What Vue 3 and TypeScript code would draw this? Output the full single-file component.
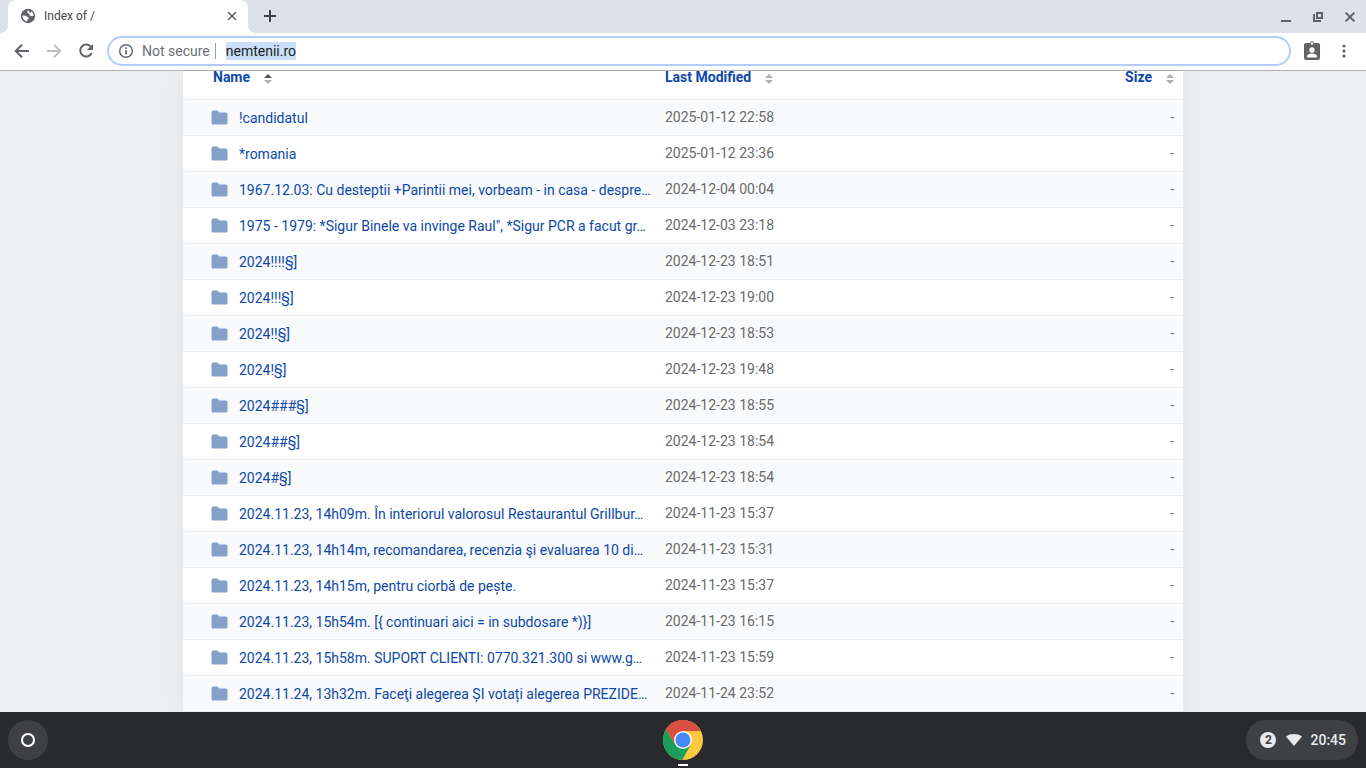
<script setup lang="ts">
import { onMounted, ref } from 'vue'

interface Entry {
  name: string
  modified: string
}

const entries: Entry[] = [
  { name: '!candidatul', modified: '2025-01-12 22:58' },
  { name: '*romania', modified: '2025-01-12 23:36' },
  { name: '1967.12.03: Cu desteptii +Parintii mei, vorbeam - in casa - despre…', modified: '2024-12-04 00:04' },
  { name: '1975 - 1979: *Sigur Binele va invinge Raul", *Sigur PCR a facut gr…', modified: '2024-12-03 23:18' },
  { name: '2024!!!!§]', modified: '2024-12-23 18:51' },
  { name: '2024!!!§]', modified: '2024-12-23 19:00' },
  { name: '2024!!§]', modified: '2024-12-23 18:53' },
  { name: '2024!§]', modified: '2024-12-23 19:48' },
  { name: '2024###§]', modified: '2024-12-23 18:55' },
  { name: '2024##§]', modified: '2024-12-23 18:54' },
  { name: '2024#§]', modified: '2024-12-23 18:54' },
  { name: '2024.11.23, 14h09m. În interiorul valorosul Restaurantul Grillbur…', modified: '2024-11-23 15:37' },
  { name: '2024.11.23, 14h14m, recomandarea, recenzia şi evaluarea 10 di…', modified: '2024-11-23 15:31' },
  { name: '2024.11.23, 14h15m, pentru ciorbă de pește.', modified: '2024-11-23 15:37' },
  { name: '2024.11.23, 15h54m. [{ continuari aici = in subdosare *)}]', modified: '2024-11-23 16:15' },
  { name: '2024.11.23, 15h58m. SUPORT CLIENTI: 0770.321.300 si www.g…', modified: '2024-11-23 15:59' },
  { name: '2024.11.24, 13h32m. Faceţi alegerea ȘI votați alegerea PREZIDE…', modified: '2024-11-24 23:52' },
]

const address = ref('nemtenii.ro')
const addressBox = ref<HTMLInputElement | null>(null)

onMounted(() => {
  addressBox.value?.focus()
  addressBox.value?.select()
})
</script>

<template>
  <div class="desktop">
    <header class="tabstrip">
      <div class="tab">
        <svg class="globe" viewBox="0 0 16 16" aria-hidden="true">
          <circle cx="8" cy="8" r="7.200" fill="#5f6368" />
          <path d="M8.800 2.600C7 3.200 6.800 4.600 7.800 5.300l1.400.5.600 1.600 1.900.8 1.900-.5C13.600 6 12.700 4.500 11.500 3.600L10.600 4.800 9.400 4.300z" fill="#fff" />
          <path d="M2.400 7.600l3.600.2 1 1 1.900.7-.3 1.500-1.200.6-.2 1.900C4.400 13.200 2.300 10.800 2.400 7.600z" fill="#fff" />
        </svg>
        <span class="tab-title">Index of /</span>
        <button class="icon-button" type="button" aria-label="Close tab">
          <svg width="16" height="16" viewBox="0 0 16 16"><path d="M4 4l8 8M12 4l-8 8" stroke="#5f6368" stroke-width="1.6" /></svg>
        </button>
      </div>
      <button class="icon-button new-tab" type="button" aria-label="New tab">
        <svg width="16" height="16" viewBox="0 0 16 16"><path d="M8 2v12M2 8h12" stroke="#3c4043" stroke-width="2" /></svg>
      </button>
      <div class="window-controls">
        <button class="icon-button" type="button" aria-label="Minimize">
          <svg width="16" height="16" viewBox="0 0 16 16"><path d="M3 13h10" stroke="#5f6368" stroke-width="2" /></svg>
        </button>
        <button class="icon-button" type="button" aria-label="Restore">
          <svg width="16" height="16" viewBox="0 0 16 16" fill="none" stroke="#5f6368" stroke-width="2"><path d="M7 5h5v5H7zM4 6v7h7" /></svg>
        </button>
        <button class="icon-button" type="button" aria-label="Close window">
          <svg width="16" height="16" viewBox="0 0 16 16"><path d="M3.600 4.600l8.800 8.800M12.400 4.600l-8.800 8.800" stroke="#5f6368" stroke-width="2" /></svg>
        </button>
      </div>
    </header>

    <nav class="toolbar">
      <button class="icon-button" type="button" aria-label="Back">
        <svg width="16" height="16" viewBox="0 0 16 16" fill="none" stroke="#5f6368" stroke-width="2"><path d="M15 8H2.500M8 1.700L1.700 8 8 14.300" /></svg>
      </button>
      <button class="icon-button" type="button" aria-label="Forward">
        <svg width="16" height="16" viewBox="0 0 16 16" fill="none" stroke="#bdbfc1" stroke-width="2"><path d="M1 8h12.500M8 1.700L14.300 8 8 14.300" /></svg>
      </button>
      <button class="icon-button" type="button" aria-label="Reload">
        <svg width="16" height="16" viewBox="0 0 16 16"><path d="M13.200 4.100A6 6 0 1 0 13.700 10" fill="none" stroke="#5f6368" stroke-width="2" /><path d="M15 1v6H9z" fill="#5f6368" /></svg>
      </button>
      <div class="omnibox">
        <svg width="16" height="16" viewBox="0 0 16 16" fill="none" stroke="#5f6368">
          <circle cx="8" cy="8" r="6.300" stroke-width="1.400" />
          <path d="M8 7v4.500M8 4.300v1.600" stroke-width="1.600" />
        </svg>
        <label class="security" for="address">Not secure</label>
        <input id="address" ref="addressBox" v-model="address" class="address" type="text" spellcheck="false" />
      </div>
      <button class="icon-button badge" type="button" aria-label="Profile">
        <svg width="18" height="20" viewBox="0 0 18 20">
          <rect x="1" y="2" width="16" height="17" rx="2" fill="#5f6368" />
          <circle cx="9" cy="2.500" r="1.800" fill="#fff" stroke="#5f6368" />
          <circle cx="9" cy="9" r="2.700" fill="#fff" />
          <path d="M4 16.500v-1.200c0-1.700 3-2.700 5-2.700s5 1 5 2.700v1.200z" fill="#fff" />
        </svg>
      </button>
      <button class="icon-button" type="button" aria-label="Menu">
        <svg width="16" height="16" viewBox="0 0 16 16" fill="#5f6368"><circle cx="8" cy="3" r="1.600" /><circle cx="8" cy="8" r="1.600" /><circle cx="8" cy="13" r="1.600" /></svg>
      </button>
    </nav>

    <main class="page">
      <div class="sheet">
        <table class="listing">
          <colgroup>
            <col class="col-name" />
            <col />
            <col class="col-size" />
          </colgroup>
          <thead>
            <tr>
              <th class="name" scope="col">
                <a href="#name">Name<svg class="sort" viewBox="0 0 8 10"><path d="M0 4l4-4 4 4z" fill="#555" /><path d="M0 6h8l-4 4z" fill="#b0b0b0" /></svg></a>
              </th>
              <th scope="col">
                <a href="#modified">Last Modified<svg class="sort" viewBox="0 0 8 10"><path d="M0 4l4-4 4 4zM0 6h8l-4 4z" fill="#b0b0b0" /></svg></a>
              </th>
              <th class="size" scope="col">
                <a href="#size">Size<svg class="sort" viewBox="0 0 8 10"><path d="M0 4l4-4 4 4zM0 6h8l-4 4z" fill="#b0b0b0" /></svg></a>
              </th>
            </tr>
          </thead>
          <tbody>
            <tr v-for="entry in entries" :key="entry.name">
              <td class="name">
                <a class="entry" href="#folder">
                  <svg class="folder" viewBox="0 0 17 15"><path d="M2 .5h4.500l2 2H15a1.500 1.500 0 0 1 1.500 1.500v9a1.500 1.500 0 0 1-1.500 1.500H2A1.500 1.500 0 0 1 .5 13V2A1.500 1.500 0 0 1 2 .5z" /></svg>
                  <span class="entry-name">{{ entry.name }}</span>
                </a>
              </td>
              <td>{{ entry.modified }}</td>
              <td class="size">-</td>
            </tr>
          </tbody>
        </table>
      </div>
    </main>

    <footer class="shelf">
      <button class="launcher" type="button" aria-label="Launcher"><span class="ring"></span></button>
      <button class="app" type="button" aria-label="Chrome">
        <svg width="40" height="40" viewBox="0 0 40 40">
          <circle cx="20" cy="20" r="20" fill="#fdc93e" />
          <path d="M20 20L3.100 9.300A20 20 0 0 1 37.900 11H20z" fill="#d94f41" />
          <path d="M3.100 9.300A20 20 0 0 0 19.300 40L27.800 24.500 12.200 24.500z" fill="#1a9e5c" />
          <path d="M3.100 9.300L12.200 24.500 20 20 20 11z" fill="#d94f41" />
          <circle cx="20" cy="20" r="9" fill="#f5f5f5" />
          <circle cx="20" cy="20" r="7.500" fill="#4688f4" />
        </svg>
        <span class="running"></span>
      </button>
      <button class="tray" type="button">
        <span class="count">2</span>
        <svg width="16" height="12" viewBox="0 0 16 12"><path d="M0 2.500C4.500-.8 11.500-.8 16 2.500L8 12z" fill="#e8eaed" /></svg>
        <span>20:45</span>
      </button>
    </footer>
  </div>
</template>

<style>
body {
  margin: 0;
}
</style>

<style scoped>
.desktop {
  display: flex;
  flex-direction: column;
  height: 100vh;
  overflow: hidden;
  font-family: Roboto, "Noto Sans", sans-serif;
  font-size: 14px;
  line-height: 18px;
}

button {
  padding: 0;
  border: 0;
  background: none;
  color: inherit;
  font: inherit;
}

svg {
  flex: none;
}

.icon-button {
  display: flex;
}

.tabstrip {
  display: flex;
  align-items: center;
  flex: none;
  box-sizing: border-box;
  height: 33px;
  padding: 0 8px 1px;
  background: #dee1e6;
}

.tab {
  position: relative;
  display: flex;
  align-items: center;
  align-self: flex-start;
  box-sizing: border-box;
  width: 240px;
  height: 33px;
  padding: 0 8px 1px 12px;
  border-radius: 8px 8px 0 0;
  background: #fff;
}

.tab::before,
.tab::after {
  content: "";
  position: absolute;
  bottom: 0;
  width: 8px;
  height: 8px;
}

.tab::before {
  right: 100%;
  background: radial-gradient(circle at 0 0, transparent 8px, #fff 8px);
}

.tab::after {
  left: 100%;
  background: radial-gradient(circle at 100% 0, transparent 8px, #fff 8px);
}

.globe {
  width: 16px;
  height: 16px;
}

.tab-title {
  flex: 1;
  margin-left: 8px;
  color: #45484c;
  font-size: 12px;
}

.new-tab {
  margin-left: 14px;
}

.window-controls {
  display: flex;
  gap: 16px;
  margin-left: auto;
}

.toolbar {
  display: flex;
  align-items: center;
  flex: none;
  box-sizing: border-box;
  gap: 16px;
  height: 38px;
  padding: 0 14px 1px;
  border-bottom: 1px solid #b3b0b3;
  background: #fff;
}

.omnibox {
  display: flex;
  align-items: center;
  flex: 1;
  box-sizing: border-box;
  height: 30px;
  margin-left: -3px;
  padding: 0 9px;
  border: 2px solid #b0cdfb;
  border-radius: 15px;
}

.security {
  margin-left: 8px;
  padding-right: 5px;
  border-right: 1px solid #9a9da1;
  color: #6b6f73;
  line-height: 16px;
}

.address {
  flex: 1;
  min-width: 0;
  height: 18px;
  margin-left: 10px;
  padding: 0;
  border: 0;
  outline: 0;
  background: none;
  color: #202124;
  font: inherit;
}

.address::selection {
  background: #c9e0f8;
  color: #202124;
}

.badge {
  margin: 0 -1px 0 -4px;
}

.page {
  flex: 1;
  min-height: 0;
  overflow: hidden;
  background: #edeef0;
}

.sheet {
  max-width: 1000px;
  min-height: 100%;
  margin: 0 auto;
  background: #fff;
  box-shadow: 0 0 20px #dfe5e6;
}

.listing {
  width: 100%;
  border-collapse: separate;
  border-spacing: 0;
  table-layout: fixed;
}

.col-name {
  width: 472px;
}

.col-size {
  width: 128px;
}

th {
  padding: 0 10px 16px;
  border-bottom: 1px solid #e9ebed;
  line-height: 12px;
  text-align: left;
}

th.name {
  padding-left: 30px;
}

th a {
  display: flex;
  align-items: center;
  color: #0c48a8;
  font-weight: 700;
  text-decoration: none;
}

th.size a {
  justify-content: flex-end;
}

.sort {
  width: 8px;
  height: 10px;
  margin: 3px 0 -1px 14px;
}

td {
  box-sizing: border-box;
  height: 36px;
  padding: 0 10px 2px;
  border-bottom: 1px solid #e9ebed;
  color: #6a6a6a;
}

td.name {
  padding: 0 6px 0 28px;
}

th.size,
td.size {
  padding-right: 9px;
  text-align: right;
}

tbody tr:nth-child(odd) {
  background: #f9fafc;
}

.entry {
  display: flex;
  align-items: center;
  gap: 11px;
  color: #0c48a8;
  text-decoration: none;
}

.folder {
  width: 17px;
  height: 15px;
  fill: #86a1c9;
}

.entry-name {
  flex: 1;
  min-width: 0;
  padding-top: 1px;
  white-space: nowrap;
}

.shelf {
  display: grid;
  grid-template-columns: 1fr auto 1fr;
  align-items: center;
  flex: none;
  height: 56px;
  padding: 0 8px;
  background: #292a2e;
  color: #e8eaed;
}

.launcher {
  display: grid;
  place-items: center;
  width: 40px;
  height: 40px;
  border-radius: 50%;
  background: #3f4043;
}

.ring {
  width: 10px;
  height: 10px;
  border: 2px solid #fff;
  border-radius: 50%;
}

.app {
  position: relative;
  display: flex;
}

.running {
  position: absolute;
  bottom: -6px;
  left: 15px;
  width: 10px;
  height: 2px;
  background: #fff;
}

.tray {
  display: flex;
  align-items: center;
  justify-self: end;
  height: 40px;
  padding: 0 12px 0 14px;
  border-radius: 20px;
  background: #3f4043;
  font-weight: 500;
}

.tray svg {
  margin: 0 8px 0 10px;
}

.count {
  width: 16px;
  height: 16px;
  border-radius: 50%;
  background: #e8eaed;
  color: #3f4043;
  font-size: 12px;
  font-weight: 700;
  line-height: 16px;
}
</style>
